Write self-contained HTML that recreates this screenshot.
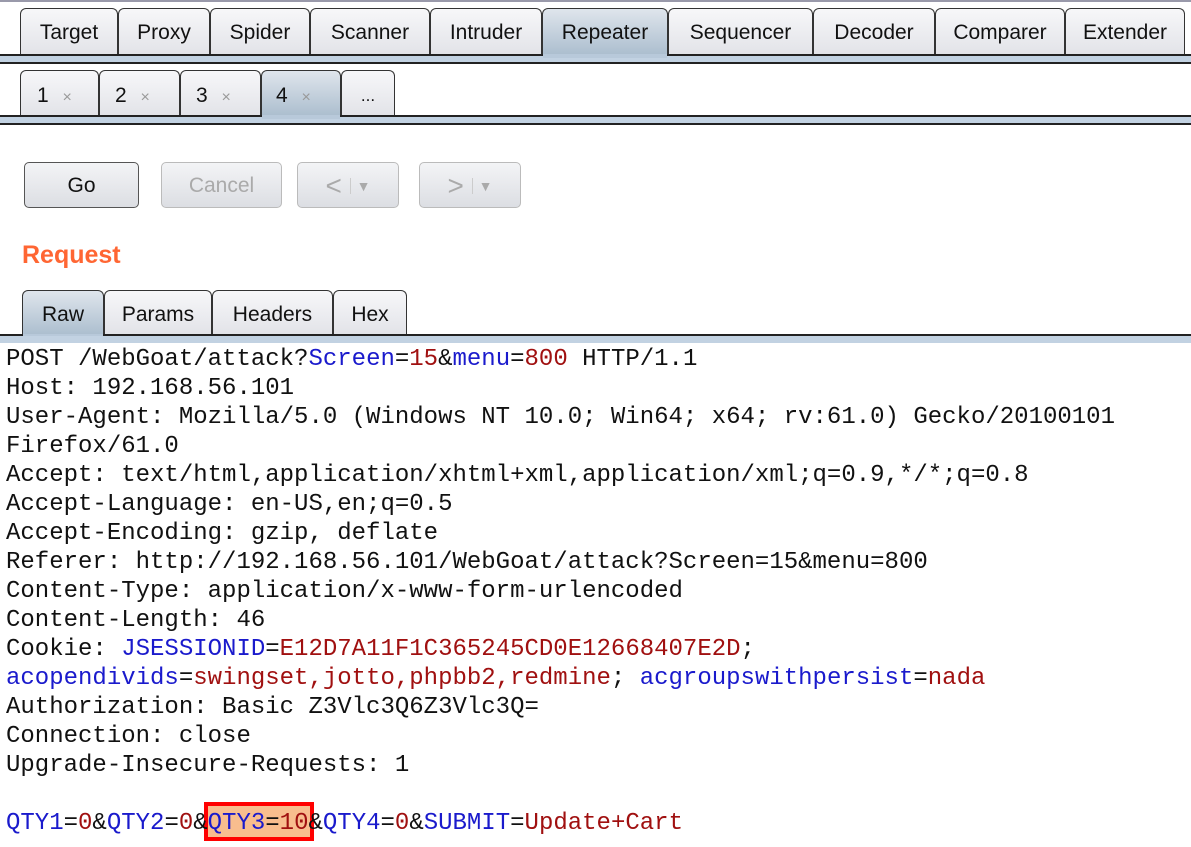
<!DOCTYPE html><html><head><style>
body{margin:0;width:1191px;height:847px;background:#fff;overflow:hidden;font-family:"Liberation Sans",Arial,sans-serif;position:relative}
.a{position:absolute}
.tab{position:absolute;box-sizing:border-box;border:1.5px solid #333;border-bottom:none;border-radius:6px 6px 0 0;background:linear-gradient(#f7f7f9,#e2e3e8);font-size:21px;color:#111;text-align:center}
.sel{background:linear-gradient(#dfe5ec,#a9bccd)}
.bar{position:absolute;left:0;width:1191px;box-sizing:border-box;border-top:2px solid #222;border-bottom:2px solid #222;background:#c2d2e2}
.btn{position:absolute;box-sizing:border-box;border:1.5px solid #bbb;border-radius:5px;background:linear-gradient(#f3f4f6,#dcdee3);font-size:21px;color:#aaa;text-align:center;line-height:46px;top:162px;height:46px}
pre{margin:0;font-family:"Liberation Mono",monospace;font-size:24px;line-height:29px;color:#111;position:absolute;left:6px;top:345px;letter-spacing:0}
.b{color:#1a1acc}.r{color:#a01010}
</style></head><body>
<div class="a" style="left:0;top:0;width:1191px;height:2px;background:#99a"></div>
<div class="tab" style="left:20px;top:8px;width:98px;height:47px;line-height:48px">Target</div>
<div class="tab" style="left:118px;top:8px;width:92px;height:47px;line-height:48px">Proxy</div>
<div class="tab" style="left:210px;top:8px;width:100px;height:47px;line-height:48px">Spider</div>
<div class="tab" style="left:310px;top:8px;width:120px;height:47px;line-height:48px">Scanner</div>
<div class="tab" style="left:430px;top:8px;width:112px;height:47px;line-height:48px">Intruder</div>
<div class="tab sel" style="left:542px;top:8px;width:126px;height:49px;line-height:48px">Repeater</div>
<div class="tab" style="left:668px;top:8px;width:145px;height:47px;line-height:48px">Sequencer</div>
<div class="tab" style="left:813px;top:8px;width:122px;height:47px;line-height:48px">Decoder</div>
<div class="tab" style="left:935px;top:8px;width:130px;height:47px;line-height:48px">Comparer</div>
<div class="tab" style="left:1065px;top:8px;width:120px;height:47px;line-height:48px">Extender</div>
<div class="bar" style="top:54px;height:10px"></div>
<div class="a sel" style="left:543px;top:54px;width:124px;height:4px;background:#b8c9da"></div>

<div class="tab" style="left:20px;top:70px;width:79px;height:46px;line-height:50px;text-align:left;padding-left:16px">1 <span style="color:#999;font-size:16px;margin-left:8px">×</span></div>
<div class="tab" style="left:99px;top:70px;width:81px;height:46px;line-height:50px;text-align:left;padding-left:15px">2 <span style="color:#999;font-size:16px;margin-left:8px">×</span></div>
<div class="tab" style="left:180px;top:70px;width:81px;height:46px;line-height:50px;text-align:left;padding-left:15px">3 <span style="color:#999;font-size:16px;margin-left:8px">×</span></div>
<div class="tab sel" style="left:261px;top:70px;width:80px;height:48px;line-height:50px;text-align:left;padding-left:14px">4 <span style="color:#999;font-size:16px;margin-left:8px">×</span></div>
<div class="tab" style="left:341px;top:70px;width:54px;height:46px;line-height:50px;font-size:17px">...</div>
<div class="bar" style="top:115px;height:10px"></div>
<div class="a" style="left:262px;top:115px;width:78px;height:4px;background:#b8c9da"></div>

<div class="btn" style="left:24px;width:115px;border-color:#555;color:#111">Go</div>
<div class="btn" style="left:161px;width:121px">Cancel</div>
<div class="btn" style="left:297px;width:102px;font-size:28px">&lt; <span style="font-size:14px;border-left:1px solid #ccc;padding-left:6px;vertical-align:4px">▼</span></div>
<div class="btn" style="left:419px;width:102px;font-size:28px">&gt; <span style="font-size:14px;border-left:1px solid #ccc;padding-left:6px;vertical-align:4px">▼</span></div>

<div class="a" style="left:22px;top:241px;font-size:25px;font-weight:bold;color:#ff6633">Request</div>

<div class="tab sel" style="left:22px;top:290px;width:82px;height:47px;line-height:48px">Raw</div>
<div class="tab" style="left:104px;top:290px;width:108px;height:45px;line-height:48px">Params</div>
<div class="tab" style="left:212px;top:290px;width:121px;height:45px;line-height:48px">Headers</div>
<div class="tab" style="left:333px;top:290px;width:74px;height:45px;line-height:48px">Hex</div>
<div class="a" style="left:0;top:334px;width:1191px;height:2px;background:#222"></div>
<div class="a" style="left:0;top:336px;width:1191px;height:7px;background:#c2d2e2"></div>
<div class="a" style="left:23px;top:334px;width:80px;height:2px;background:#b8c9da"></div>

<div class="a" style="left:208px;top:806px;width:102px;height:31px;background:#f8bd8e;outline:4px solid #f00;outline-offset:0"></div>
<pre>POST /WebGoat/attack?<span class="b">Screen</span>=<span class="r">15</span>&amp;<span class="b">menu</span>=<span class="r">800</span> HTTP/1.1
Host: 192.168.56.101
User-Agent: Mozilla/5.0 (Windows NT 10.0; Win64; x64; rv:61.0) Gecko/20100101
Firefox/61.0
Accept: text/html,application/xhtml+xml,application/xml;q=0.9,*/*;q=0.8
Accept-Language: en-US,en;q=0.5
Accept-Encoding: gzip, deflate
Referer: http://192.168.56.101/WebGoat/attack?Screen=15&amp;menu=800
Content-Type: application/x-www-form-urlencoded
Content-Length: 46
Cookie: <span class="b">JSESSIONID</span>=<span class="r">E12D7A11F1C365245CD0E12668407E2D</span>;
<span class="b">acopendivids</span>=<span class="r">swingset,jotto,phpbb2,redmine</span>; <span class="b">acgroupswithpersist</span>=<span class="r">nada</span>
Authorization: Basic Z3Vlc3Q6Z3Vlc3Q=
Connection: close
Upgrade-Insecure-Requests: 1

<span class="b">QTY1</span>=<span class="r">0</span>&amp;<span class="b">QTY2</span>=<span class="r">0</span>&amp;<span class="b">QTY3</span>=<span class="r">10</span>&amp;<span class="b">QTY4</span>=<span class="r">0</span>&amp;<span class="b">SUBMIT</span>=<span class="r">Update+Cart</span></pre>
</body></html>
